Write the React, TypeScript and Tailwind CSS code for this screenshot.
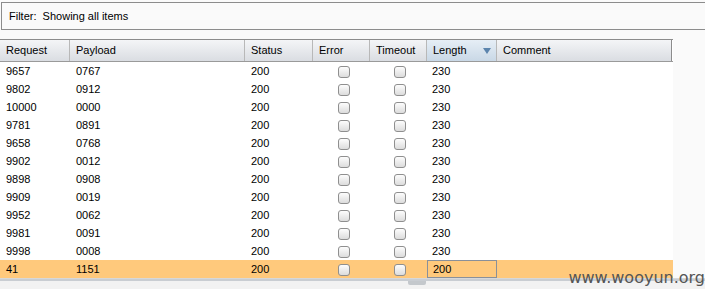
import React from "react";

const rows = [
  ["9657", "0767", "200", "230"],
  ["9802", "0912", "200", "230"],
  ["10000", "0000", "200", "230"],
  ["9781", "0891", "200", "230"],
  ["9658", "0768", "200", "230"],
  ["9902", "0012", "200", "230"],
  ["9898", "0908", "200", "230"],
  ["9909", "0019", "200", "230"],
  ["9952", "0062", "200", "230"],
  ["9981", "0091", "200", "230"],
  ["9998", "0008", "200", "230"],
  ["41", "1151", "200", "200"],
];

const cols = [
  { name: "Request", w: "w-[70px]" },
  { name: "Payload", w: "w-[175px]" },
  { name: "Status", w: "w-[68px]" },
  { name: "Error", w: "w-[57px]" },
  { name: "Timeout", w: "w-[57px]" },
  { name: "Length", w: "w-[70px]" },
  { name: "Comment", w: "w-[175px]" },
];

function Box() {
  return (
    <div className="w-[12px] h-[12px] rounded-[3px] border border-[#8f8f8f] bg-gradient-to-b from-[#fdfdfd] to-[#dcdcdc]" />
  );
}

export default function App() {
  return (
    <div
      className="relative w-[705px] h-[289px] overflow-hidden bg-[#fafafa] text-[11px] text-black"
      style={{ fontFamily: '"Liberation Sans", Arial, sans-serif' }}
    >
      <div className="pt-[2px]">
        <div className="ml-[1px] h-[28px] border-t border-l border-b border-[#8c8c8c] bg-[#fafafa] flex items-center pl-[7px]">
          <span>Filter:&nbsp; Showing all items</span>
        </div>
      </div>
      <div className="mt-[9px] flex">
        <div className="w-[673px] border-t border-[#8c8c8c] bg-white">
          <div className="flex h-[22px] border-b border-[#9a9a9a]">
            {cols.map((c, i) => (
              <div
                key={c.name}
                className={`${c.w} flex items-center pl-[6px] border-r ${
                  i === 6 ? "border-[#8c8c8c]" : "border-[#b8b8b8]"
                } ${
                  c.name === "Length"
                    ? "bg-gradient-to-b from-[#e6eef6] to-[#c9d8e6] justify-between pr-[5px]"
                    : "bg-gradient-to-b from-[#f4f5f7] to-[#dadde2]"
                }`}
              >
                <span>{c.name}</span>
                {c.name === "Length" && (
                  <svg width="8" height="6" viewBox="0 0 8 6">
                    <path d="M0 0 H8 L4 6 Z" fill="#5b84ad" />
                  </svg>
                )}
              </div>
            ))}
          </div>
          {rows.map((r, idx) => {
            const hl = idx === rows.length - 1;
            return (
              <div key={idx} className={`flex h-[18px] items-center pt-[1px] ${hl ? "bg-[#ffc97c]" : ""}`}>
                <div className="w-[70px] pl-[6px]">{r[0]}</div>
                <div className="w-[175px] pl-[6px]">{r[1]}</div>
                <div className="w-[68px] pl-[6px]">{r[2]}</div>
                <div className="w-[57px] flex justify-center pl-[5px]"><Box /></div>
                <div className="w-[57px] flex justify-center pl-[3px]"><Box /></div>
                <div
                  className={`w-[70px] h-[18px] flex items-center pl-[5px] ${
                    hl ? "border border-[#8a9099] -mt-[1px] pt-[1px]" : ""
                  }`}
                >
                  {r[3]}
                </div>
                <div className="w-[175px]" />
              </div>
            );
          })}
        </div>
      </div>
      <div className="h-[3px] bg-[#c9cdd2] border-t border-[#d8d8d8]" />
      <div className="relative h-[8px] bg-[#f2f2f2]">
        <div className="absolute left-[408px] top-0 w-[18px] h-[4px] rounded-b-[2px] bg-[#c4c8cc]" />
      </div>
      <div
        className="absolute right-[0px] bottom-[-1px] text-[16px] text-[#555555]"
        style={{ fontFamily: '"DejaVu Sans", Verdana, sans-serif' }}
      >
        www.wooyun.org
      </div>
    </div>
  );
}
